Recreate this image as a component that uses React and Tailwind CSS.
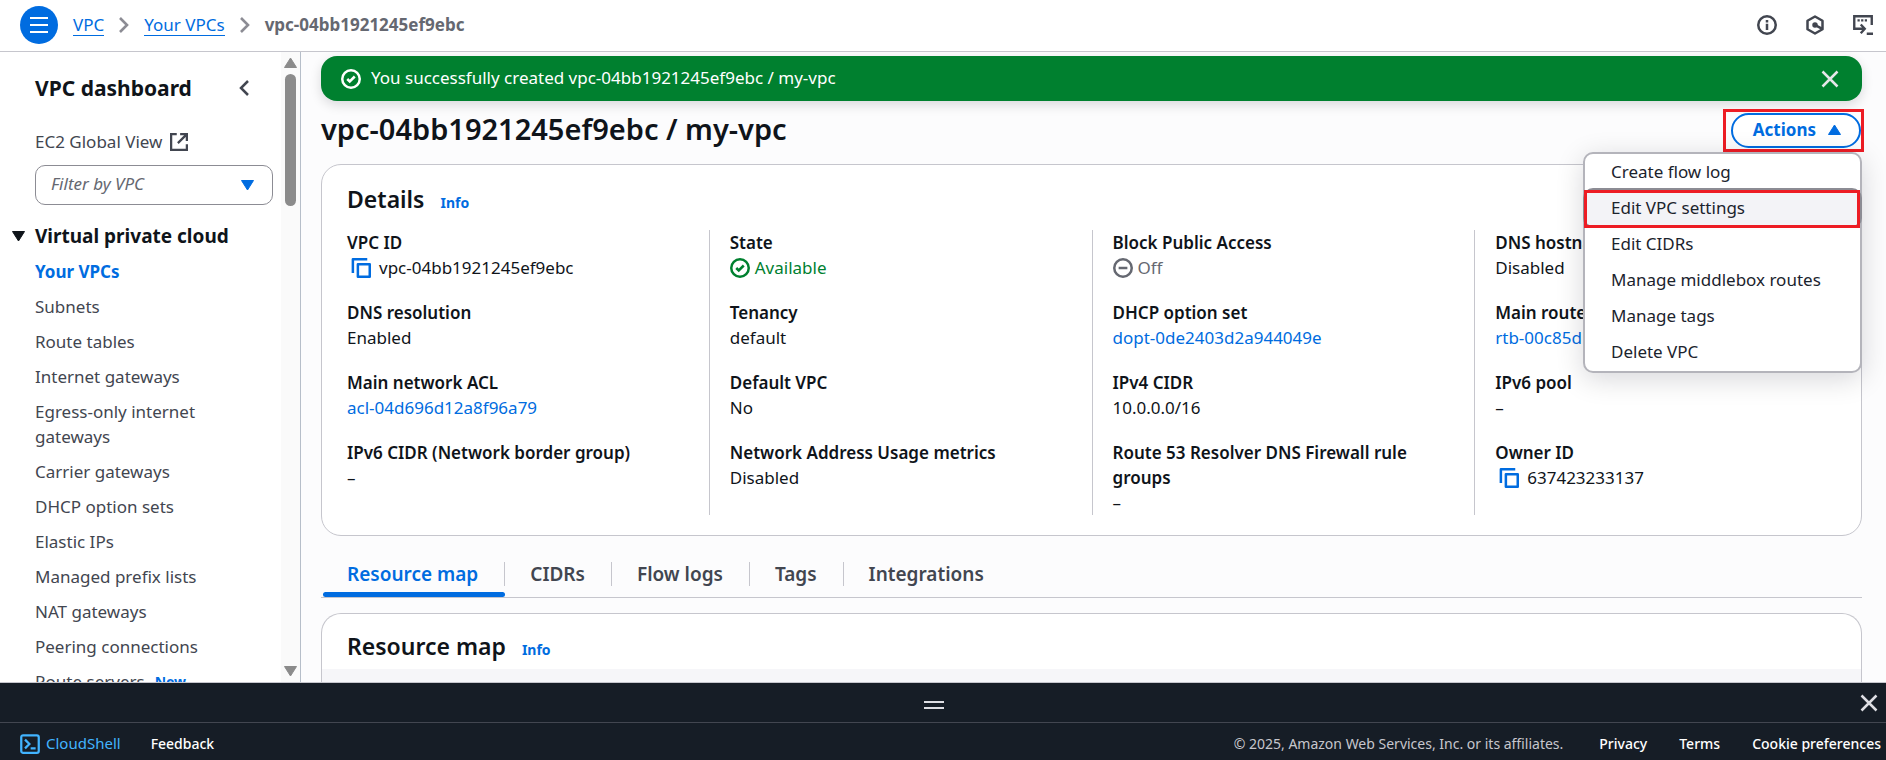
const sideLinks = [
  'Subnets',
  'Route tables',
  'Internet gateways',
  'Egress-only internet gateways',
  'Carrier gateways',
  'DHCP option sets',
  'Elastic IPs',
  'Managed prefix lists',
  'NAT gateways',
  'Peering connections',
];

const detailColumns = [
  [
    { label: 'VPC ID', value: 'vpc-04bb1921245ef9ebc', kind: 'copy' },
    { label: 'DNS resolution', value: 'Enabled' },
    { label: 'Main network ACL', value: 'acl-04d696d12a8f96a79', kind: 'link' },
    { label: 'IPv6 CIDR (Network border group)', value: '–' },
  ],
  [
    { label: 'State', value: 'Available', kind: 'ok' },
    { label: 'Tenancy', value: 'default' },
    { label: 'Default VPC', value: 'No' },
    { label: 'Network Address Usage metrics', value: 'Disabled' },
  ],
  [
    { label: 'Block Public Access', value: 'Off', kind: 'off' },
    { label: 'DHCP option set', value: 'dopt-0de2403d2a944049e', kind: 'link' },
    { label: 'IPv4 CIDR', value: '10.0.0.0/16' },
    { label: 'Route 53 Resolver DNS Firewall rule groups', value: '–' },
  ],
  [
    { label: 'DNS hostnames', value: 'Disabled' },
    { label: 'Main route table', value: 'rtb-00c85d', kind: 'link' },
    { label: 'IPv6 pool', value: '–' },
    { label: 'Owner ID', value: '637423233137', kind: 'copy' },
  ],
];

const actions = [
  'Create flow log',
  'Edit VPC settings',
  'Edit CIDRs',
  'Manage middlebox routes',
  'Manage tags',
  'Delete VPC',
];

const tabs = ['Resource map', 'CIDRs', 'Flow logs', 'Tags', 'Integrations'];

function Icon({ children, className = '' }) {
  return (
    <svg
      viewBox="0 0 16 16"
      fill="none"
      stroke="currentColor"
      strokeWidth="2"
      aria-hidden="true"
      className={`size-5 shrink-0 ${className}`}
    >
      {children}
    </svg>
  );
}

function CheckCircle({ className }) {
  return (
    <Icon className={className}>
      <circle cx="8" cy="8" r="7" />
      <path d="m5 8 2 2 4-4" />
    </Icon>
  );
}

function CopyIcon() {
  return (
    <Icon>
      <path d="M1.500 12V1H13" strokeLinejoin="round" />
      <path d="M5.500 5H15v10H5.500z" strokeLinejoin="round" />
    </Icon>
  );
}

function CloseIcon({ className }) {
  return (
    <Icon className={className}>
      <path d="m2 2 12 12M14 2 2 14" />
    </Icon>
  );
}

function Triangle({ up, className = '' }) {
  return (
    <svg viewBox="0 0 13 11" fill="currentColor" stroke="currentColor" strokeWidth="1" strokeLinejoin="round" aria-hidden="true" className={`h-[11px] w-[13px] shrink-0 ${className}`}>
      {up ? <path d="M6.500 1 12.500 10.500H.5z" /> : <path d="M.5.500h12L6.500 10z" />}
    </svg>
  );
}

function Crumb() {
  return (
    <svg viewBox="0 0 10 16" fill="none" stroke="currentColor" strokeWidth="2.600" aria-hidden="true" className="mx-[15px] h-4 w-[10px] text-[#8c8c94]">
      <path d="m1 1 7 7-7 7" />
    </svg>
  );
}

function Value({ item }) {
  if (item.kind === 'link') {
    return <a href="#" className="text-[#006ce0]">{item.value}</a>;
  }
  if (item.kind === 'copy') {
    return (
      <span className="flex items-center gap-2 pl-1">
        <button type="button" aria-label={`Copy ${item.label}`} className="text-[#006ce0]"><CopyIcon /></button>
        {item.value}
      </span>
    );
  }
  if (item.kind === 'ok') {
    return <span className="flex items-center gap-[5px] text-[#00802f]"><CheckCircle />{item.value}</span>;
  }
  if (item.kind === 'off') {
    return (
      <span className="flex items-center gap-[5px] text-[#656871]">
        <Icon><circle cx="8" cy="8" r="7" /><path d="M4.500 8h7" /></Icon>
        {item.value}
      </span>
    );
  }
  return item.value;
}

function TopBar() {
  return (
    <header className="flex h-[52px] shrink-0 items-center border-b border-[#c6c6cd] bg-white pb-2 pl-5 pr-[13px] pt-[6px]">
      <button type="button" aria-label="Open menu" className="mr-[15px] flex size-[38px] items-center justify-center rounded-full bg-[#006ce0] text-white">
        <svg viewBox="0 0 18 16" stroke="currentColor" strokeWidth="2" aria-hidden="true" className="h-4 w-[18px]">
          <path d="M0 1h18M0 8h18M0 15h18" />
        </svg>
      </button>
      <nav aria-label="Breadcrumb" className="flex items-center">
        <a href="#" className="border-b border-[#006ce0] leading-[21px] text-[#006ce0]">VPC</a>
        <Crumb />
        <a href="#" className="border-b border-[#006ce0] leading-[21px] text-[#006ce0]">Your VPCs</a>
        <Crumb />
        <span className="font-bold leading-[21px] text-[#656871]">vpc-04bb1921245ef9ebc</span>
      </nav>
      <div className="ml-auto flex items-center gap-7 text-[#424650]">
        <button type="button" aria-label="Info">
          <Icon><circle cx="8" cy="8" r="7" /><path d="M8 7v5M8 4v2" /></Icon>
        </button>
        <button type="button" aria-label="Diagnostics">
          <Icon>
            <path d="M8 1.200 14 4.600v6.800l-6 3.400-6-3.400V4.600z" strokeLinejoin="round" />
            <circle cx="8" cy="8" r="1.200" fill="currentColor" />
            <path d="m8.500 8.300 5 2.600" />
          </Icon>
        </button>
        <button type="button" aria-label="CloudShell">
          <Icon>
            <path d="M5 11H1V1h14v7M3.600 4.300h1.800M6.500 4.300h1.800M9.400 4.300h1.800M4 11h5M6.200 7.600 9.400 11l-3.200 3.600M11 15h5" strokeWidth="1.900" />
          </Icon>
        </button>
      </div>
    </header>
  );
}

function SideBar() {
  return (
    <aside className="flex w-[301px] shrink-0 border-r border-[#b6bec9] bg-white">
      <div className="min-w-0 flex-1 overflow-hidden pl-[35px] pr-2 pt-[21px]">
        <div className="flex items-center justify-between pr-6">
          <h2 className="text-[21px] font-bold leading-[30px] text-[#0f141a]">VPC dashboard</h2>
          <button type="button" aria-label="Close navigation" className="text-[#424650]">
            <svg viewBox="0 0 10 16" fill="none" stroke="currentColor" strokeWidth="2.500" aria-hidden="true" className="h-4 w-[10px]">
              <path d="M9 1 2 8l7 7" />
            </svg>
          </button>
        </div>
        <a href="#" className="mt-[26px] flex items-center gap-2 leading-[25px] text-[#424650]">
          EC2 Global View
          <Icon className="!size-[18px]">
            <path d="M6 1H1v14h14v-5M9 1h6v6M15 1 7 9" />
          </Icon>
        </a>
        <div className="relative mt-[11px]">
          <select aria-label="Filter by VPC" className="h-10 w-full appearance-none rounded-[10px] border border-[#8c8c94] bg-white pb-0.5 pl-[15px] pr-10 italic text-[#656871]">
            <option>Filter by VPC</option>
          </select>
          <Triangle className="pointer-events-none absolute right-[19px] top-[15px] text-[#006ce0]" />
        </div>
        <h3 className="-ml-[23px] mt-[19px] flex items-center gap-2.5 text-[19px] font-bold leading-[25px] text-[#0f141a]">
          <Triangle />
          Virtual private cloud
        </h3>
        <ul className="mt-2.5 flex flex-col gap-2.5 leading-[25px] text-[#424650]">
          <li><a href="#" className="font-bold text-[#006ce0]">Your VPCs</a></li>
          {sideLinks.map((name) => (
            <li key={name} className="pr-12"><a href="#">{name}</a></li>
          ))}
          <li className="flex items-center gap-2.5">
            <a href="#">Route servers</a>
            <span className="text-[14px] font-bold text-[#006ce0]">New</span>
          </li>
        </ul>
      </div>
      <div className="flex w-[19px] shrink-0 flex-col items-center bg-[#fafafa] pb-[5px] pt-[5px] text-[#8b8b8b]">
        <Triangle up />
        <div className="mt-[6px] h-[132px] w-[11px] rounded-full bg-[#8b8b8b]" />
        <Triangle className="mt-auto" />
      </div>
    </aside>
  );
}

function ActionsMenu() {
  return (
    <div className="relative">
      <div className="-mr-[2px] border-[3px] border-[#ed1c24] py-[1px] pl-[5px]">
        <button type="button" aria-expanded="true" className="flex h-[35px] items-center gap-3 rounded-full border-2 border-[#006ce0] bg-white pb-0.5 pl-5 pr-[18px] font-bold text-[#006ce0]">
          Actions
          <Triangle up />
        </button>
      </div>
      <ul role="menu" className="absolute right-0 top-full z-10 w-[279px] rounded-[10px] border-2 border-[#b4b4bb] bg-white pb-px leading-[25px] text-[#1b232d] shadow-[0_6px_28px_rgba(0,7,22,0.16)]">
        {actions.map((name, i) =>
          i === 1 ? (
            <li key={name} role="none" className="relative -mx-[2px] -my-[2px] rounded-[10px] border-2 border-[#8c8c94] bg-[#f3f3f7]">
              <button role="menuitem" type="button" className="h-9 w-full px-[26px] pb-0.5 text-left">{name}</button>
              <span className="pointer-events-none absolute -bottom-[2px] -left-px right-0 top-0 border-[3px] border-[#ed1c24]" />
            </li>
          ) : (
            <li key={name} role="none">
              <button role="menuitem" type="button" className="h-9 w-full px-[26px] pb-0.5 text-left">{name}</button>
            </li>
          ),
        )}
      </ul>
    </div>
  );
}

function CardHeading({ children }) {
  return (
    <h2 className="flex items-baseline gap-4 px-[25px] text-[23px] font-semibold leading-[30px] text-[#0f141a]">
      {children}
      <a href="#" className="text-[14px] font-bold text-[#006ce0]">Info</a>
    </h2>
  );
}

function MainPanel() {
  return (
    <main className="min-w-0 flex-1 overflow-hidden bg-[#fcfcfd] pl-5 pr-6 pt-1">
      <div role="status" className="flex h-[45px] items-center gap-2.5 rounded-2xl bg-[#00802f] pl-5 pr-[22px] text-white shadow-[0_4px_12px_rgba(0,7,22,0.14)]">
        <CheckCircle />
        <p className="flex-1 pb-0.5">You successfully created vpc-04bb1921245ef9ebc / my-vpc</p>
        <button type="button" aria-label="Dismiss" className="text-[#e6e6ea]"><CloseIcon /></button>
      </div>
      <div className="mt-2 flex items-start justify-between">
        <h1 className="text-[29px] font-semibold leading-10 text-[#0f141a]">vpc-04bb1921245ef9ebc / my-vpc</h1>
        <ActionsMenu />
      </div>
      <section className="mt-3 rounded-[20px] border border-[#c6c6cd] bg-white pb-[20px] pt-[19px]">
        <CardHeading>Details</CardHeading>
        <div className="mt-3 grid grid-cols-4 px-1">
          {detailColumns.map((column, i) => (
            <dl key={column[0].label} className={`flex flex-col gap-5 leading-[25px] text-[#0f141a] ${i ? 'border-l border-[#c6c6cd] px-5' : 'px-[21px]'}`}>
              {column.map((item) => (
                <div key={item.label}>
                  <dt className="pr-8 font-semibold">{item.label}</dt>
                  <dd><Value item={item} /></dd>
                </div>
              ))}
            </dl>
          ))}
        </div>
      </section>
      <div role="tablist" className="mt-[20px] flex border-b border-[#c6c6cd] text-[19px] font-semibold text-[#424650]">
        {tabs.map((name, i) => (
          <button
            key={name}
            role="tab"
            type="button"
            aria-selected={i === 0}
            className={`relative flex h-[41px] items-start pt-1.5 ${i === 0 ? 'ml-0.5 text-[#006ce0]' : ''}`}
          >
            <span className={`pr-[26px] leading-6 ${i === 0 ? 'pl-6' : 'pl-[25px]'} ${i < tabs.length - 1 ? 'border-r border-[#c6c6cd]' : ''}`}>{name}</span>
            {i === 0 && <span className="absolute inset-x-0 bottom-0 h-[5px] rounded-full bg-[#006ce0]" />}
          </button>
        ))}
      </div>
      <section className="mt-[15px] overflow-hidden rounded-t-[20px] border border-b-0 border-[#c6c6cd] bg-white pt-[17px]">
        <CardHeading>Resource map</CardHeading>
        <div className="mt-1 h-40 bg-[#f6f6f9]" />
      </section>
    </main>
  );
}

function BottomBar() {
  return (
    <footer className="shrink-0 border-t border-[#c6c6cd] bg-[#161d26] text-[14px] text-white">
      <div className="flex h-[39px] items-center pl-2 pr-[7px]">
        <div className="flex flex-1 justify-center pt-1">
          <span className="h-2 w-5 border-y-2 border-[#dedee3]" />
        </div>
        <button type="button" aria-label="Close panel" className="text-[#dedee3]"><CloseIcon /></button>
      </div>
      <div className="flex h-[38px] items-center border-t border-[#424650] pl-5 pr-[5px] pt-1">
        <button type="button" className="flex items-center gap-1.5 text-[15px] text-[#42b4ff]">
          <Icon>
            <rect x="1" y="1" width="14" height="14" rx="1.500" strokeWidth="1.800" />
            <path d="m4 4.500 3.500 3.500L4 11.500M8.500 11.500h4" strokeWidth="1.800" />
          </Icon>
          CloudShell
        </button>
        <a href="#" className="ml-[30px] font-medium">Feedback</a>
        <div className="ml-auto flex items-center gap-8 font-medium">
          <span className="mr-1 font-normal text-[#c6c6cd]">© 2025, Amazon Web Services, Inc. or its affiliates.</span>
          <a href="#">Privacy</a>
          <a href="#">Terms</a>
          <a href="#">Cookie preferences</a>
        </div>
      </div>
    </footer>
  );
}

export default function App() {
  return (
    <div className="flex h-screen flex-col overflow-hidden font-['Noto_Sans',sans-serif] text-[17px]">
      <TopBar />
      <div className="flex min-h-0 flex-1">
        <SideBar />
        <MainPanel />
      </div>
      <BottomBar />
    </div>
  );
}
